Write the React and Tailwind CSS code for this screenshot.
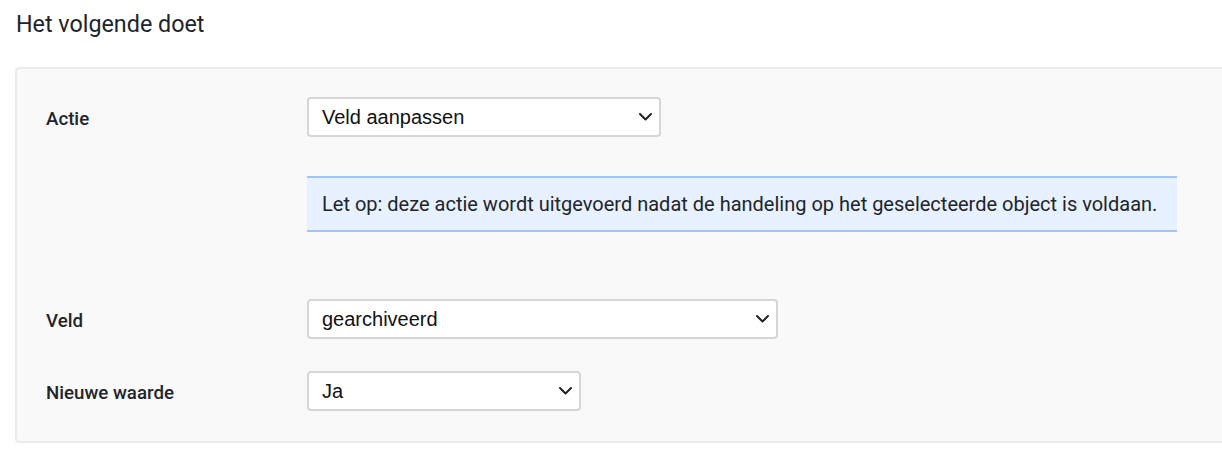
import React from 'react';

const Chevron = () => (
  <svg width="13" height="8" viewBox="0 0 13 8" fill="none" className="shrink-0">
    <path d="M1 1 L6.5 6.5 L12 1" stroke="#222" strokeWidth="2" strokeLinecap="round" strokeLinejoin="round" />
  </svg>
);

const FakeSelect = ({ value, width }) => (
  <div
    className={`${width} h-10 flex items-center justify-between pl-[13px] pr-[7px] bg-white border-2 border-[#d6d6d6] rounded-[4px] text-[20px] text-[#111] font-['Liberation_Sans',Arial,sans-serif]`}
  >
    <span>{value}</span>
    <Chevron />
  </div>
);

const Row = ({ label, children, className = '' }) => (
  <div className={`flex items-center ${className}`}>
    <div className="w-[261px] pt-[5px] text-[18.7px] font-medium text-[#212529]">{label}</div>
    {children}
  </div>
);

export default function App() {
  return (
    <div className="w-[1222px] h-[457px] overflow-hidden bg-white font-['Roboto',sans-serif] text-[#212529]">
      <h2 className="pl-4 pt-[9px] text-[23.3px] leading-[30px] font-normal">Het volgende doet</h2>
      <div className="ml-[15px] mt-[28px] w-[1240px] bg-[#f9f9f9] border-2 border-[#ebebeb] rounded-[4px] pl-[29px] pt-[28px] pb-[30px]">
        <Row label="Actie">
          <FakeSelect value="Veld aanpassen" width="w-[354px]" />
        </Row>
        <div className="ml-[261px] mt-[39px] w-[870px] h-[56px] flex items-center px-[15px] bg-[#e7f1ff] border-y-2 border-[#9ec5fe] text-[20px] text-[#212529]">
          Let op: deze actie wordt uitgevoerd nadat de handeling op het geselecteerde object is voldaan.
        </div>
        <Row label="Veld" className="mt-[67px]">
          <FakeSelect value="gearchiveerd" width="w-[471px]" />
        </Row>
        <Row label="Nieuwe waarde" className="mt-[32px]">
          <FakeSelect value="Ja" width="w-[274px]" />
        </Row>
      </div>
    </div>
  );
}
